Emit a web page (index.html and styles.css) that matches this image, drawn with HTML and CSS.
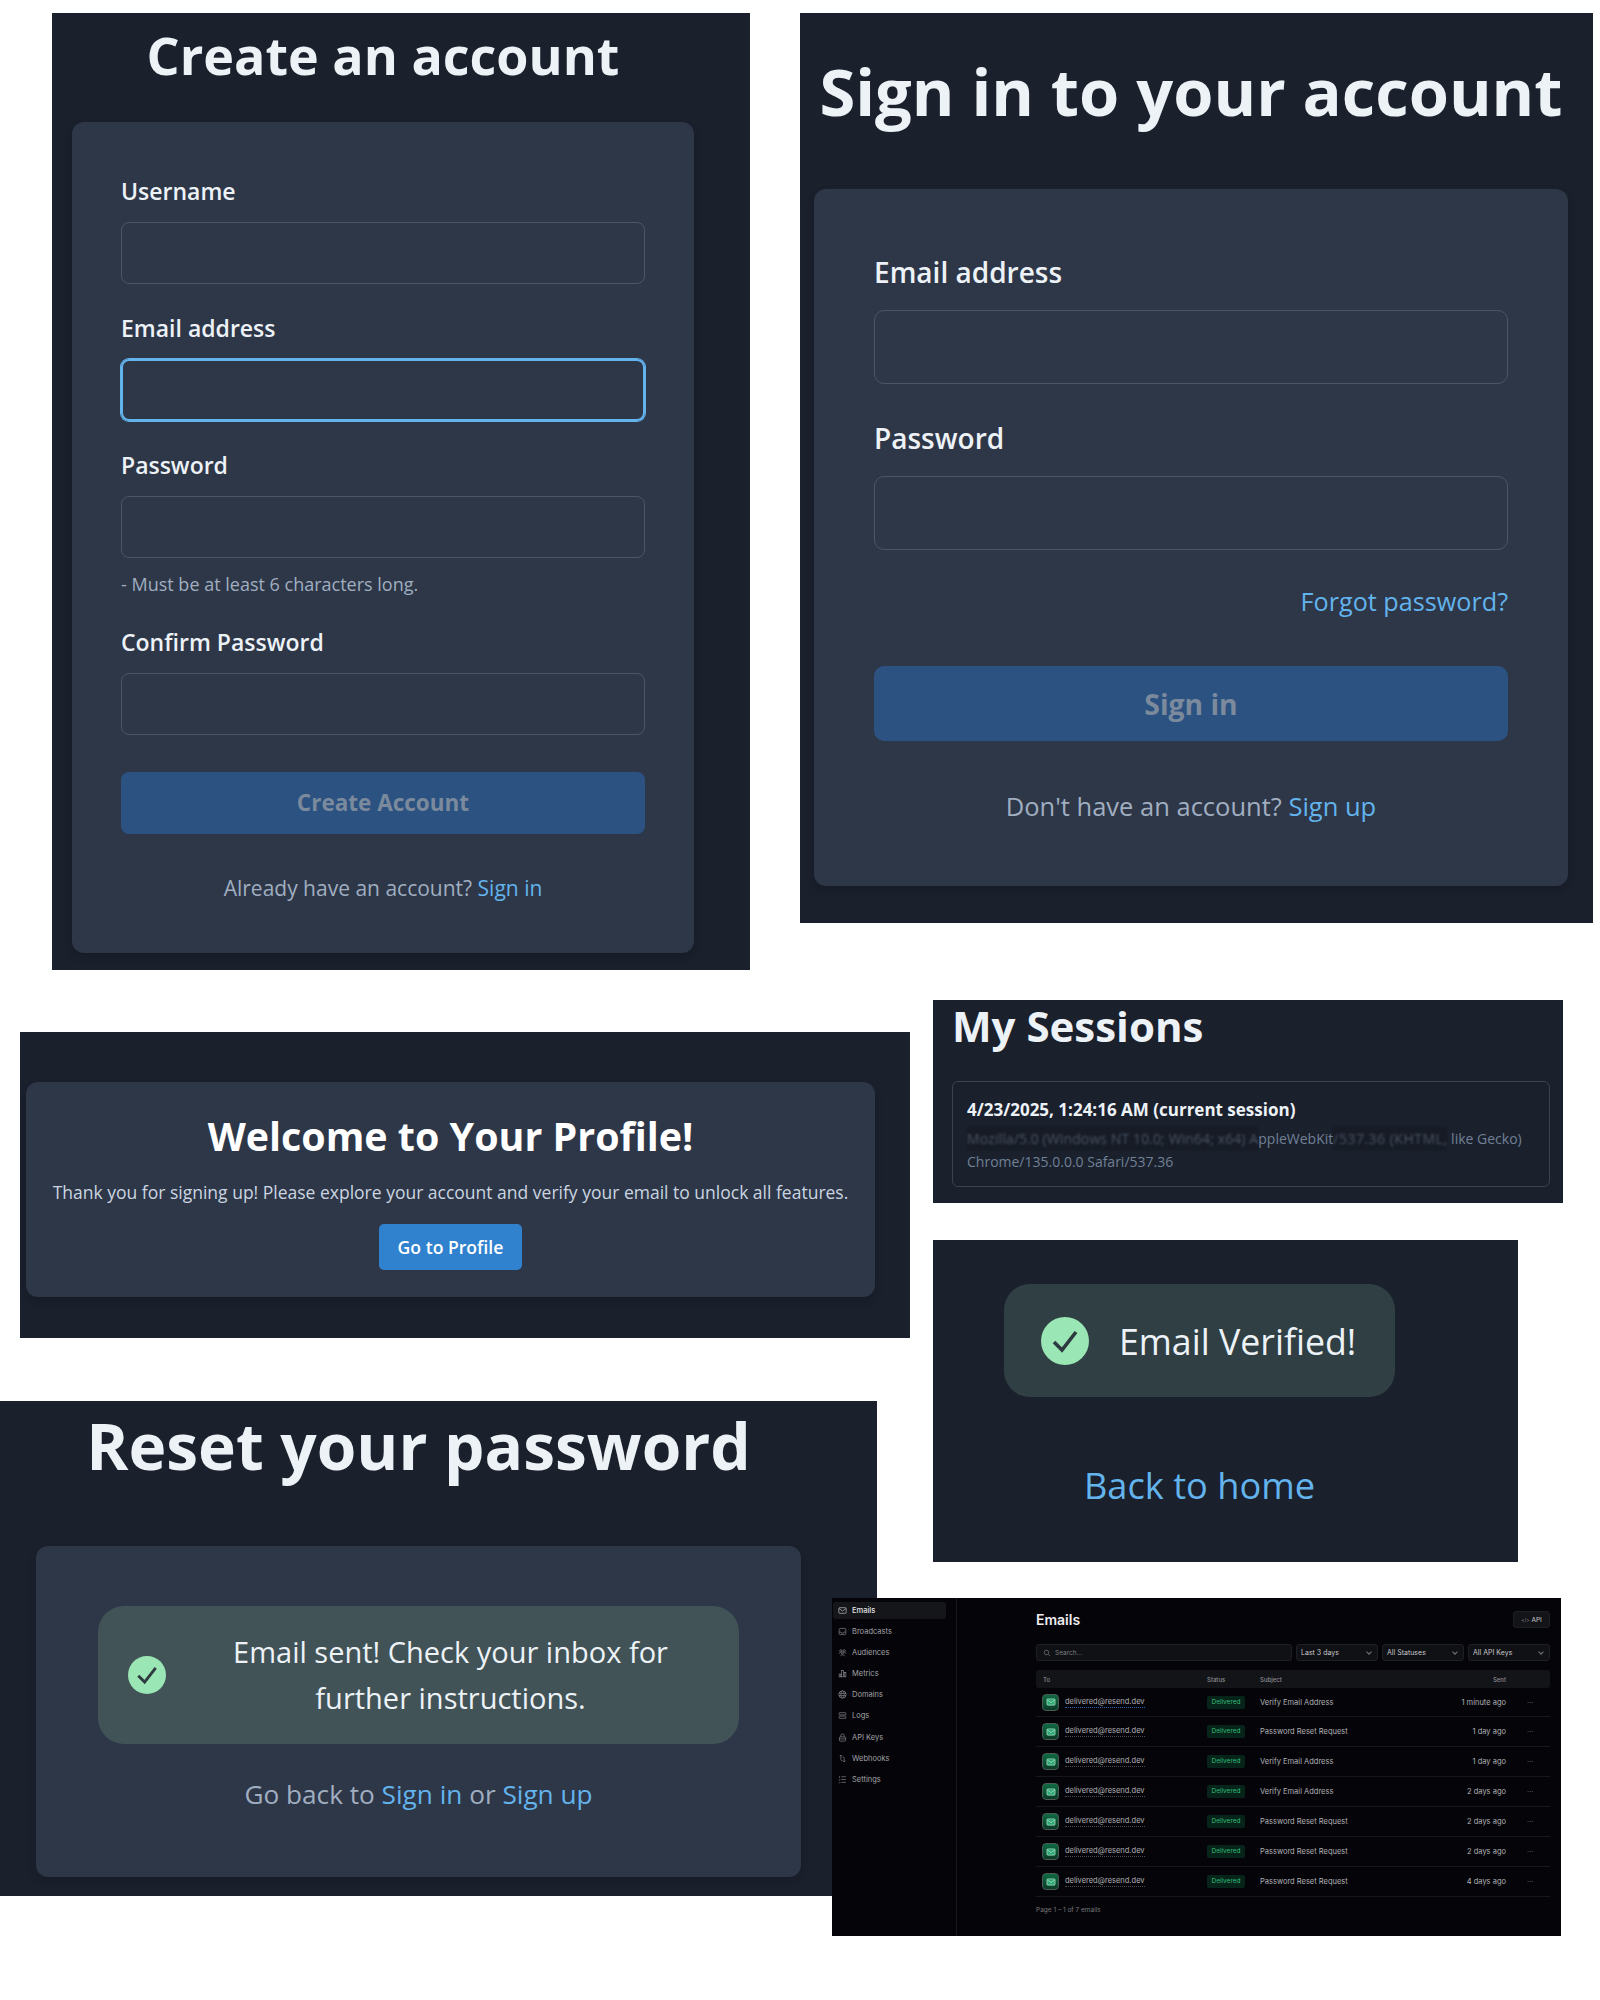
FILE: index.html
```html
<!DOCTYPE html>
<html lang="en">
<head>
  <meta charset="UTF-8" />
  <meta name="viewport" content="width=device-width, initial-scale=1.0" />
  <title>Auth screens</title>
  <link rel="stylesheet" href="styles.css">
</head>
<body>
  <svg class="sprite" width="0" height="0">
    <symbol id="i-mail" viewBox="0 0 16 16"><rect x="1.5" y="3" width="13" height="10" rx="1.5"/><path d="M2 4.5 8 9l6-4.5"/></symbol>
    <symbol id="i-inbox" viewBox="0 0 16 16"><rect x="2" y="2.5" width="12" height="11" rx="2"/><path d="M2 9h3.5l1 2h3l1-2H14"/></symbol>
    <symbol id="i-users" viewBox="0 0 16 16"><circle cx="5" cy="5" r="2"/><circle cx="11" cy="5" r="2"/><circle cx="8" cy="9" r="1.8"/><path d="M1.5 10c.5-1.5 1.5-2 3-2M14.500 10c-.5-1.500-1.500-2-3-2M4.500 14.500c.5-2 2-2.500 3.500-2.500s3 .5 3.500 2.500"/></symbol>
    <symbol id="i-chart" viewBox="0 0 16 16"><rect x="2" y="9" width="3" height="5"/><rect x="6.500" y="2.500" width="3" height="11.500"/><rect x="11" y="6" width="3" height="8"/></symbol>
    <symbol id="i-globe" viewBox="0 0 16 16"><circle cx="8" cy="8" r="6.500"/><ellipse cx="8" cy="8" rx="3" ry="6.500"/><path d="M1.500 6h13M1.500 10h13"/></symbol>
    <symbol id="i-logs" viewBox="0 0 16 16"><rect x="2" y="3" width="12" height="4" rx="1"/><rect x="2" y="9" width="12" height="4" rx="1"/></symbol>
    <symbol id="i-lock" viewBox="0 0 16 16"><rect x="2.500" y="7" width="11" height="7.500" rx="1.500"/><path d="M5 7V4.500a3 3 0 0 1 6 0V7M2.500 10.500h11"/></symbol>
    <symbol id="i-hook" viewBox="0 0 16 16"><path d="M5 2v7c0 2 1 3 3 3M3 4l2-2 2 2M11 14V8c0-2-1-3-3-3M13 12l-2 2-2-2"/></symbol>
    <symbol id="i-sliders" viewBox="0 0 16 16"><path d="M6 3h8M6 8h8M6 13h8M2 2l1.500 1.500L2 5M2 7l1.500 1.500L2 10M2 12l1.500 1.500L2 15"/></symbol>
    <symbol id="i-check" viewBox="0 0 24 24"><ellipse class="check-disc" cx="12" cy="12" rx="12" ry="12"/><path class="check-mark" d="M6.500 12.500 10.500 16.500 17.500 7.500"/></symbol>
  </svg>

  <main class="canvas">
    <!-- create account -->
    <section class="shot shot-signup">
      <h1 class="signup-title">Create an account</h1>
      <div class="card signup-card">
        <label class="signup-label">Username</label>
        <div class="signup-input"></div>
        <label class="signup-label">Email address</label>
        <div class="signup-input focused"></div>
        <label class="signup-label">Password</label>
        <div class="signup-input"></div>
        <p class="signup-hint">- Must be at least 6 characters long.</p>
        <label class="signup-label">Confirm Password</label>
        <div class="signup-input"></div>
        <div class="signup-btn">Create Account</div>
        <p class="signup-foot">Already have an account? <a>Sign in</a></p>
      </div>
    </section>

    <!-- sign in -->
    <section class="shot shot-signin">
      <h1 class="signin-title">Sign in to your account</h1>
      <div class="card signin-card">
        <label class="signin-label">Email address</label>
        <div class="signin-input"></div>
        <label class="signin-label">Password</label>
        <div class="signin-input"></div>
        <p class="signin-forgot"><a>Forgot password?</a></p>
        <div class="signin-btn">Sign in</div>
        <p class="signin-foot">Don't have an account? <a>Sign up</a></p>
      </div>
    </section>

    <!-- welcome -->
    <section class="shot shot-welcome">
      <div class="card welcome-card">
        <h2>Welcome to Your Profile!</h2>
        <p>Thank you for signing up! Please explore your account and verify your email to unlock all features.</p>
        <div class="welcome-btn">Go to Profile</div>
      </div>
    </section>

    <!-- sessions -->
    <section class="shot shot-sessions">
      <h2>My Sessions</h2>
      <div class="session-box">
        <div class="session-date">4/23/2025, 1:24:16 AM (current session)</div>
        <div class="session-agent"><span class="smear smear-long">Mozilla/5.0 (Windows NT 10.0; Win64; x64) A</span>ppleWebKit<span class="smear smear-short">/537.36 (KHTML,</span> like Gecko)<br>Chrome/135.0.0.0 Safari/537.36</div>
      </div>
    </section>

    <!-- verified -->
    <section class="shot shot-verified">
      <div class="verified-alert">
        <svg class="check"><use href="#i-check"/></svg>
        <span>Email Verified!</span>
      </div>
      <a class="verified-link">Back to home</a>
    </section>

    <!-- reset -->
    <section class="shot shot-reset">
      <h1>Reset your password</h1>
      <div class="card reset-card">
        <div class="reset-alert">
          <svg class="check"><use href="#i-check"/></svg>
          <span>Email sent! Check your inbox for further instructions.</span>
        </div>
        <p class="reset-foot">Go back to <a>Sign in</a> or <a>Sign up</a></p>
      </div>
    </section>

    <!-- resend dashboard -->
    <section class="shot shot-dash">
      <aside class="dash-side">
        <div class="side-item active"><svg><use href="#i-mail"/></svg>Emails</div>
        <div class="side-item"><svg><use href="#i-inbox"/></svg>Broadcasts</div>
        <div class="side-item"><svg><use href="#i-users"/></svg>Audiences</div>
        <div class="side-item"><svg><use href="#i-chart"/></svg>Metrics</div>
        <div class="side-item"><svg><use href="#i-globe"/></svg>Domains</div>
        <div class="side-item"><svg><use href="#i-logs"/></svg>Logs</div>
        <div class="side-item"><svg><use href="#i-lock"/></svg>API Keys</div>
        <div class="side-item"><svg><use href="#i-hook"/></svg>Webhooks</div>
        <div class="side-item"><svg><use href="#i-sliders"/></svg>Settings</div>
      </aside>
      <div class="dash-main">
        <div class="dash-head">
          <h3>Emails</h3>
          <div class="api-btn"><span class="api-code">&lt;/&gt;</span> API</div>
        </div>
        <div class="filters">
          <div class="search">
            <svg viewBox="0 0 16 16"><circle cx="7" cy="7" r="4.500"/><path d="m10.500 10.500 3.500 3.500"/></svg>
            Search...
          </div>
          <div class="select">Last 3 days<i></i></div>
          <div class="select">All Statuses<i></i></div>
          <div class="select">All API Keys<i></i></div>
        </div>
        <div class="table-head email-grid">
          <span class="col-to">To</span>
          <span>Status</span>
          <span>Subject</span>
          <span class="col-sent">Sent</span>
          <span></span>
        </div>
        <div class="email-row email-grid">
          <div class="col-to to-cell"><span class="avatar"><svg><use href="#i-mail"/></svg></span><span class="addr first">delivered@resend.dev</span></div>
          <div><span class="badge">Delivered</span></div>
          <div>Verify Email Address</div>
          <div class="col-sent">1 minute ago</div>
          <div class="dots">···</div>
        </div>
        <div class="email-row email-grid">
          <div class="col-to to-cell"><span class="avatar"><svg><use href="#i-mail"/></svg></span><span class="addr">delivered@resend.dev</span></div>
          <div><span class="badge">Delivered</span></div>
          <div>Password Reset Request</div>
          <div class="col-sent">1 day ago</div>
          <div class="dots">···</div>
        </div>
        <div class="email-row email-grid">
          <div class="col-to to-cell"><span class="avatar"><svg><use href="#i-mail"/></svg></span><span class="addr">delivered@resend.dev</span></div>
          <div><span class="badge">Delivered</span></div>
          <div>Verify Email Address</div>
          <div class="col-sent">1 day ago</div>
          <div class="dots">···</div>
        </div>
        <div class="email-row email-grid">
          <div class="col-to to-cell"><span class="avatar"><svg><use href="#i-mail"/></svg></span><span class="addr">delivered@resend.dev</span></div>
          <div><span class="badge">Delivered</span></div>
          <div>Verify Email Address</div>
          <div class="col-sent">2 days ago</div>
          <div class="dots">···</div>
        </div>
        <div class="email-row email-grid">
          <div class="col-to to-cell"><span class="avatar"><svg><use href="#i-mail"/></svg></span><span class="addr">delivered@resend.dev</span></div>
          <div><span class="badge">Delivered</span></div>
          <div>Password Reset Request</div>
          <div class="col-sent">2 days ago</div>
          <div class="dots">···</div>
        </div>
        <div class="email-row email-grid">
          <div class="col-to to-cell"><span class="avatar"><svg><use href="#i-mail"/></svg></span><span class="addr">delivered@resend.dev</span></div>
          <div><span class="badge">Delivered</span></div>
          <div>Password Reset Request</div>
          <div class="col-sent">2 days ago</div>
          <div class="dots">···</div>
        </div>
        <div class="email-row email-grid">
          <div class="col-to to-cell"><span class="avatar"><svg><use href="#i-mail"/></svg></span><span class="addr">delivered@resend.dev</span></div>
          <div><span class="badge">Delivered</span></div>
          <div>Password Reset Request</div>
          <div class="col-sent">4 days ago</div>
          <div class="dots">···</div>
        </div>
        <p class="pager">Page 1 – 1 of 7 emails</p>
      </div>
    </section>
  </main>
</body>
</html>
```

FILE: styles.css
```css
body {
  margin: 0;
  background: #fff;
  font-family: "Open Sans", "Noto Sans", sans-serif;
  color: #edf2f7;
}

h1, h2, h3, p {
  margin: 0;
}

.sprite {
  position: absolute;
}

a {
  color: #63b3ed;
}

.canvas {
  position: relative;
  width: 1600px;
  height: 2000px;
  overflow: hidden;
}

/* each screenshot sits on the canvas at its own place */
.shot {
  position: absolute;
  box-sizing: border-box;
  background: #1a202c;
}

.shot-signup { left: 52px; top: 13px; width: 698px; height: 957px; padding: 0 20px; }
.shot-signin { left: 800px; top: 13px; width: 793px; height: 910px; padding: 0 14px; }
.shot-welcome { left: 20px; top: 1032px; width: 890px; height: 306px; padding: 50px 6px 0; }
.shot-sessions { left: 933px; top: 1000px; width: 630px; height: 203px; padding: 1px 19px 0; }
.shot-verified { left: 933px; top: 1240px; width: 585px; height: 322px; padding: 44px 71px 0; }
.shot-reset { left: 0; top: 1401px; width: 877px; height: 495px; padding: 0 36px; }
.shot-dash { left: 832px; top: 1598px; width: 729px; height: 338px; }

.card {
  box-sizing: border-box;
  background: #2d3748;
  border-radius: 12px;
  box-shadow: 0 4px 10px rgba(0, 0, 0, 0.12);
}

/* create account */
.signup-title {
  width: 622px;
  height: 109px;
  line-height: 84px;
  font-size: 52px;
  font-weight: 700;
  text-align: center;
}

.signup-card {
  width: 622px;
  height: 831px;
  padding: 54px 49px 0;
}

.signup-label {
  display: block;
  height: 30px;
  line-height: 30px;
  margin-bottom: 16px;
  font-size: 23px;
  font-weight: 600;
}

.signup-input {
  box-sizing: border-box;
  height: 62px;
  margin-bottom: 29px;
  border: 1.5px solid #4a5568;
  border-radius: 8px;
}

.signup-input.focused {
  border: 2.5px solid #63b3ed;
  box-shadow: 0 0 0 1px #63b3ed;
}

.signup-hint {
  margin: -15px 0 31px;
  line-height: 24px;
  font-size: 18px;
  color: #a0aec0;
}

.signup-btn {
  height: 62px;
  margin-top: 37px;
  line-height: 62px;
  border-radius: 8px;
  background: #2c5282;
  color: #7b8a9c;
  font-size: 22.500px;
  font-weight: 700;
  text-align: center;
}

.signup-foot {
  margin-top: 39px;
  line-height: 30px;
  font-size: 21px;
  color: #a0aec0;
  text-align: center;
}

/* sign in */
.signin-title {
  width: 754px;
  height: 176px;
  line-height: 156px;
  font-size: 65px;
  font-weight: 700;
  text-align: center;
}

.signin-card {
  width: 754px;
  height: 697px;
  padding: 66px 60px 0;
}

.signin-label {
  display: block;
  height: 34px;
  line-height: 34px;
  margin-bottom: 21px;
  font-size: 28px;
  font-weight: 600;
}

.signin-input {
  box-sizing: border-box;
  height: 74px;
  margin-bottom: 37px;
  border: 1.5px solid #4a5568;
  border-radius: 10px;
}

.signin-forgot {
  margin: -2px 0 48px;
  line-height: 33px;
  font-size: 25.200px;
  text-align: right;
}

.signin-btn {
  height: 75px;
  line-height: 77px;
  border-radius: 10px;
  background: #2c5282;
  color: #7b8a9c;
  font-size: 28.300px;
  font-weight: 700;
  text-align: center;
}

.signin-foot {
  margin-top: 48px;
  line-height: 34px;
  font-size: 25.500px;
  color: #a0aec0;
  text-align: center;
}

/* welcome */
.welcome-card {
  width: 849px;
  height: 215px;
  padding-top: 29px;
  text-align: center;
}

.welcome-card h2 {
  line-height: 50px;
  font-size: 39.400px;
  font-weight: 700;
  color: #fff;
}

.welcome-card p {
  margin-top: 17px;
  line-height: 28px;
  font-size: 17.500px;
  color: #cbd5e0;
}

.welcome-btn {
  width: 143px;
  height: 46px;
  margin: 18px auto 0;
  line-height: 46px;
  border-radius: 5px;
  background: #3182ce;
  color: #fff;
  font-size: 17.600px;
  font-weight: 600;
}

/* sessions */
.shot-sessions h2 {
  line-height: 50px;
  font-size: 42px;
  font-weight: 700;
}

.session-box {
  box-sizing: border-box;
  width: 598px;
  height: 106px;
  margin-top: 30px;
  padding: 16px 14px 0;
  border: 1px solid #3b4352;
  border-radius: 6px;
}

.session-date {
  line-height: 24px;
  font-size: 17px;
  font-weight: 700;
}

.session-agent {
  margin-top: 5px;
  line-height: 23px;
  font-size: 14px;
  color: #718096;
  white-space: nowrap;
}

.smear {
  display: inline-block;
  vertical-align: bottom;
  background: rgba(0, 0, 0, 0.14);
  color: #4b5565;
  filter: blur(0.8px);
}

.smear-long { letter-spacing: 0.1px; }
.smear-short { letter-spacing: 0.5px; }

/* status alerts */
.check {
  flex: none;
  width: 48px;
  height: 48px;
}

.check-disc {
  fill: #9ae6b4;
}

.check-mark {
  fill: none;
  stroke: #2d3a3f;
  stroke-width: 1.800;
}

.verified-alert {
  box-sizing: border-box;
  display: flex;
  align-items: center;
  gap: 30px;
  width: 391px;
  height: 113px;
  padding-left: 37px;
  border-radius: 26px;
  background: #2f3f44;
  font-size: 35.700px;
}

.verified-link {
  display: block;
  width: 391px;
  margin-top: 63px;
  line-height: 50px;
  font-size: 36.200px;
  text-align: center;
}

.shot-reset h1 {
  width: 765px;
  height: 145px;
  line-height: 90px;
  font-size: 64px;
  font-weight: 700;
  text-align: center;
}

.reset-card {
  width: 765px;
  height: 331px;
  padding: 60px 62px 0;
}

.reset-alert {
  box-sizing: border-box;
  display: flex;
  align-items: center;
  gap: 30px;
  height: 138px;
  padding: 0 34px 0 30px;
  border-radius: 26px;
  background: #415357;
  font-size: 29px;
  line-height: 46px;
  text-align: center;
}

.reset-alert .check {
  width: 38px;
  height: 38px;
}

.reset-foot {
  margin-top: 29px;
  line-height: 42px;
  font-size: 26.200px;
  color: #a0aec0;
  text-align: center;
}

/* dashboard */
.shot-dash {
  display: flex;
  background: #050509;
  color: #a1a1a6;
  font-family: Inter, "Noto Sans", sans-serif;
  font-size: 7.500px;
}

.dash-side {
  box-sizing: border-box;
  width: 125px;
  padding: 4px 10px 0 1px;
  border-right: 1px solid #17181d;
}

.side-item {
  display: flex;
  align-items: center;
  gap: 5px;
  height: 17px;
  margin-bottom: 4.100px;
  padding-left: 5px;
  border-radius: 3px;
}

.side-item.active {
  background: #15161a;
  color: #e2e2e5;
  font-weight: 500;
}

.side-item svg {
  width: 9px;
  height: 9px;
  fill: none;
  stroke: currentColor;
}

.dash-main {
  flex: 1;
  padding: 0 11px 0 79px;
}

.dash-head {
  display: flex;
  justify-content: space-between;
  align-items: center;
  height: 42px;
  margin-bottom: 4px;
}

.dash-head h3 {
  font-size: 14px;
  font-weight: 600;
  color: #ededf0;
}

.api-btn {
  width: 37px;
  height: 17px;
  line-height: 16px;
  box-sizing: border-box;
  border: 1px solid #1e1f24;
  border-radius: 3px;
  background: #131418;
  text-align: center;
  font-size: 6.500px;
  color: #c8c8cc;
}

.api-code {
  font-size: 5px;
  color: #8a8a90;
}

.filters {
  display: flex;
  gap: 4px;
  height: 17px;
}

.search,
.select {
  display: flex;
  align-items: center;
  box-sizing: border-box;
  border: 1px solid #1e1f24;
  border-radius: 3px;
  background: #101115;
}

.search {
  flex: 1;
  gap: 4px;
  padding-left: 6px;
  font-size: 6.500px;
  color: #7d7d83;
}

.search svg {
  width: 8px;
  height: 8px;
  fill: none;
  stroke: #a0a0a6;
}

.select {
  position: relative;
  width: 82px;
  padding-left: 4px;
  color: #c8c8cc;
  font-size: 7px;
}

.select i {
  position: absolute;
  right: 6px;
  top: 5px;
  width: 3px;
  height: 3px;
  border-right: 1px solid #77777d;
  border-bottom: 1px solid #77777d;
  transform: rotate(45deg);
}

.email-grid {
  display: grid;
  grid-template-columns: 171px 53px 1fr 70px 44px;
  align-items: center;
}

.table-head {
  height: 18px;
  margin-top: 9px;
  border-radius: 3px;
  background: #131418;
  font-size: 6px;
  font-weight: 500;
  color: #8c8c92;
}

.col-to {
  padding-left: 7px;
}

.col-sent {
  text-align: right;
}

.email-row {
  height: 30px;
  box-sizing: border-box;
  border-bottom: 1px solid #16171c;
  color: #b0b0b5;
}

.table-head + .email-row {
  height: 29px;
}

.to-cell {
  display: flex;
  align-items: center;
  gap: 6px;
  padding-left: 6px;
}

.avatar {
  display: flex;
  align-items: center;
  justify-content: center;
  box-sizing: border-box;
  width: 17px;
  height: 17px;
  border: 1px solid #4b5a53;
  border-radius: 4px;
  background: linear-gradient(#0f6a43, #0a3a27);
}

.avatar svg {
  width: 10px;
  height: 10px;
  fill: #2fa874;
  stroke: #c9efdc;
}

.addr {
  padding-bottom: 1px;
  border-bottom: 1px dotted #4c4c52;
}

.addr.first {
  border-bottom-color: #2563a8;
}

.badge {
  display: block;
  width: 38px;
  height: 13px;
  line-height: 13px;
  border-radius: 2px;
  background: #06241a;
  color: #2fbf78;
  font-size: 6.500px;
  text-align: center;
}

.dots {
  padding-left: 21px;
  color: #5f5f65;
}

.pager {
  margin-top: 9px;
  font-size: 6.500px;
  color: #77777d;
}
```
